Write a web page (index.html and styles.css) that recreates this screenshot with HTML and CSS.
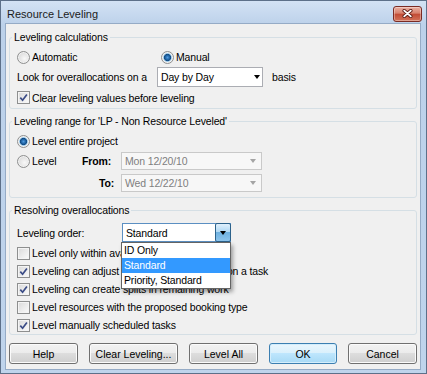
FILE: index.html
```html
<!DOCTYPE html>
<html lang="en">
<head>
    <meta charset="UTF-8">
    <meta name="viewport" content="width=device-width, initial-scale=1.0">
    <title>Resource Leveling</title>
    <link rel="stylesheet" href="styles.css">
</head>
<body>

    <div class="window">
        <div class="titlebar">
            <span class="title">Resource Leveling</span>
            <button class="close" type="button">
                <svg width="11" height="9" viewBox="0 0 11 9">
                    <path d="M2.2 1.6 L8.8 7.4 M8.8 1.6 L2.2 7.4" stroke="#5b1c16" stroke-width="3.4" stroke-linecap="round"/>
                    <path d="M2.2 1.6 L8.8 7.4 M8.8 1.6 L2.2 7.4" stroke="#fff" stroke-width="1.8" stroke-linecap="round"/>
                </svg>
            </button>
        </div>

        <div class="frame">
            <div class="client">

                <!-- leveling calculations -->
                <fieldset class="group">
                    <legend>Leveling calculations</legend>
                    <div class="row row-first">
                        <label class="opt col-auto"><span class="radio"></span>Automatic</label>
                        <label class="opt"><span class="radio on"></span>Manual</label>
                    </div>
                    <div class="row row-combo">
                        <span class="look-label">Look for overallocations on a</span>
                        <div class="combo combo-day">
                            <span class="val">Day by Day</span>
                            <span class="arrow"></span>
                        </div>
                        <span class="basis">basis</span>
                    </div>
                    <div class="row row-combo">
                        <label class="opt"><span class="check on"><svg width="9" height="9" viewBox="0 0 9 9"><path d="M1.3 4.6 L3.6 7.2 L7.9 1.4" fill="none" stroke="#3b4c86" stroke-width="1.7"/></svg></span>Clear leveling values before leveling</label>
                    </div>
                </fieldset>

                <!-- leveling range -->
                <fieldset class="group group-range">
                    <legend>Leveling range for 'LP - Non Resource Leveled'</legend>
                    <div class="row row-first">
                        <label class="opt"><span class="radio on"></span>Level entire project</label>
                    </div>
                    <div class="row row-range">
                        <label class="opt col-level"><span class="radio"></span>Level</label>
                        <span class="range-label">From:</span>
                        <div class="combo combo-off">
                            <span class="val">Mon 12/20/10</span>
                            <span class="arrow"></span>
                        </div>
                    </div>
                    <div class="row row-range">
                        <span class="col-level"></span>
                        <span class="range-label to">To:</span>
                        <div class="combo combo-off">
                            <span class="val">Wed 12/22/10</span>
                            <span class="arrow"></span>
                        </div>
                    </div>
                </fieldset>

                <!-- resolving overallocations -->
                <fieldset class="group">
                    <legend>Resolving overallocations</legend>
                    <div class="row row-order">
                        <span class="order-label">Leveling order:</span>
                        <div class="combo combo-open">
                            <span class="val">Standard</span>
                            <span class="drop-btn"><span class="arrow"></span></span>
                            <ul class="drop-list">
                                <li>ID Only</li>
                                <li class="selected">Standard</li>
                                <li>Priority, Standard</li>
                            </ul>
                        </div>
                    </div>
                    <div class="row row-check first-check">
                        <label class="opt"><span class="check"></span>Level only within available slack</label>
                    </div>
                    <div class="row row-check">
                        <label class="opt"><span class="check on"><svg width="9" height="9" viewBox="0 0 9 9"><path d="M1.3 4.6 L3.6 7.2 L7.9 1.4" fill="none" stroke="#3b4c86" stroke-width="1.7"/></svg></span>Leveling can adjust individual assignments on a task</label>
                    </div>
                    <div class="row row-check">
                        <label class="opt"><span class="check on"><svg width="9" height="9" viewBox="0 0 9 9"><path d="M1.3 4.6 L3.6 7.2 L7.9 1.4" fill="none" stroke="#3b4c86" stroke-width="1.7"/></svg></span>Leveling can create splits in remaining work</label>
                    </div>
                    <div class="row row-check">
                        <label class="opt"><span class="check"></span>Level resources with the proposed booking type</label>
                    </div>
                    <div class="row row-check">
                        <label class="opt"><span class="check on"><svg width="9" height="9" viewBox="0 0 9 9"><path d="M1.3 4.6 L3.6 7.2 L7.9 1.4" fill="none" stroke="#3b4c86" stroke-width="1.7"/></svg></span>Level manually scheduled tasks</label>
                    </div>
                </fieldset>

                <div class="buttons">
                    <button class="btn" type="button">Help</button>
                    <button class="btn btn-wide" type="button">Clear Leveling...</button>
                    <button class="btn" type="button">Level All</button>
                    <button class="btn btn-ok" type="button">OK</button>
                    <button class="btn" type="button">Cancel</button>
                </div>

            </div>
        </div>
    </div>

</body>
</html>
```

FILE: styles.css
```css
* {
    box-sizing: border-box;
}

body {
    margin: 0;
    font-family: "Liberation Sans", Arial, sans-serif;
    font-size: 10.5px;
    letter-spacing: -0.15px;
    color: #000;
}

/* window frame */
.window {
    width: 427px;
    height: 374px;
    display: flex;
    flex-direction: column;
    border: 1px solid #5d7089;
    background: linear-gradient(#d3e2f4, #bcd1ea 24px, #bfd4ec);
}

.titlebar {
    flex: none;
    height: 22px;
    display: flex;
    align-items: center;
    padding: 3px 4px 0 6px;
}

.title {
    font-size: 11px;
    letter-spacing: 0;
    color: #1b1b1b;
}

.close {
    margin-left: auto;
    width: 29px;
    height: 16px;
    padding: 0;
    display: flex;
    align-items: center;
    justify-content: center;
    border: 1px solid #7a2b24;
    border-radius: 3px;
    background: linear-gradient(#eab0a3, #d7806c 45%, #c24a34 50%, #d2735a);
    box-shadow: inset 0 0 0 1px rgba(255, 255, 255, 0.35);
}

.frame {
    flex: 1;
    display: flex;
    padding: 0 5px 3px 4px;
}

.client {
    flex: 1;
    background: #f0f0f0;
    border: 1px solid #95abc6;
    padding: 6px 3px 5px;
}

/* group boxes */
.group {
    margin: 0;
    min-width: 0;
    padding: 0 6px 0 2px;
    border: 1px solid #d5dfe5;
    border-radius: 3px;
}

.group + .group {
    margin-top: 5px;
}

.group legend {
    padding: 0 2px;
    height: 14px;
    line-height: 14px;
}

.group-range {
    padding-bottom: 3px;
}

.row {
    display: flex;
    align-items: center;
    padding-left: 5px;
}

.row-first {
    margin-top: 4px;
    height: 18px;
}

.row-combo {
    height: 21px;
}

.row-range {
    height: 22px;
}

.row-order {
    margin-top: 5px;
    height: 21px;
}

.row-check {
    height: 18px;
}

.first-check {
    margin-top: 1px;
}

.opt {
    display: flex;
    align-items: center;
    white-space: nowrap;
}

.col-auto {
    width: 144px;
}

.col-level {
    width: 65px;
}

/* radio and check */
.radio {
    flex: none;
    width: 13px;
    height: 13px;
    margin-right: 2px;
    border: 1px solid #8e8f8f;
    border-radius: 50%;
    background: radial-gradient(circle at 60% 60%, #f8f8f8, #dadada 75%);
    box-shadow: inset 0 0 0 1px #f2f2f2;
}

.radio.on {
    background: radial-gradient(circle, #4f9be0 0, #1c5f9f 2.4px, #144a80 3.2px, #8cc3ea 3.9px, #e4e4e4 4.8px, #f7f7f7 6px);
}

.check {
    flex: none;
    width: 13px;
    height: 13px;
    margin-right: 2px;
    display: flex;
    align-items: center;
    justify-content: center;
    border: 1px solid #8e8f8f;
    background: linear-gradient(135deg, #d9d9d9, #fbfbfb);
    box-shadow: inset 0 0 0 1px #f4f4f4;
}

/* combos */
.combo {
    position: relative;
    display: flex;
    align-items: center;
    height: 20px;
    padding-left: 3px;
    border: 1px solid #abadb3;
    background: #fff;
}

.combo .val {
    flex: 1;
    white-space: nowrap;
}

.arrow {
    width: 0;
    height: 0;
    border-left: 3.5px solid transparent;
    border-right: 3.5px solid transparent;
    border-top: 4px solid #000;
}

.look-label {
    width: 140px;
}

.combo-day {
    width: 106px;
}

.combo-day .arrow {
    margin-right: 2px;
}

.basis {
    margin-left: 9px;
}

.range-label {
    width: 39px;
    font-weight: bold;
}

.range-label.to {
    padding-left: 17px;
}

.combo-off {
    width: 141px;
    height: 18px;
    border-color: #c9c9c9;
    background: #f7f7f7;
    color: #7f7f7f;
}

.combo-off .arrow {
    margin-right: 5px;
    border-top-color: #a4a4a4;
}

.order-label {
    width: 105px;
}

.combo-open {
    width: 109px;
    height: 19px;
    padding-right: 0;
    border-color: #5b8fc2;
}

.drop-btn {
    align-self: stretch;
    width: 16px;
    display: flex;
    align-items: center;
    justify-content: center;
    border: 1px solid #2c628b;
    border-radius: 2px;
    margin: -1px -1px -1px 0;
    background: linear-gradient(#e0f0fc, #b1d9f4 45%, #6fb1e0 50%, #8cc4ec);
}

.drop-list {
    position: absolute;
    top: calc(100% + 1px);
    left: -2px;
    width: 110px;
    margin: 0;
    padding: 0;
    list-style: none;
    border: 1px solid #646464;
    background: #fff;
    box-shadow: 2px 3px 4px rgba(0, 0, 0, 0.35);
    z-index: 2;
}

.drop-list li {
    height: 15px;
    line-height: 15px;
    padding-left: 2px;
    white-space: nowrap;
}

.drop-list .selected {
    background: #3399ff;
    color: #fff;
}

/* dialog buttons */
.buttons {
    display: flex;
    justify-content: space-between;
    margin-top: 8px;
}

.btn {
    width: 69px;
    height: 21px;
    padding: 0;
    font: inherit;
    color: #000;
    border: 1px solid #707070;
    border-radius: 3px;
    background: linear-gradient(#f2f2f2, #ebebeb 50%, #dddddd 50%, #cfcfcf);
    box-shadow: inset 0 0 0 1px #fbfbfb;
}

.btn-wide {
    width: 89px;
}

.btn-ok {
    width: 68px;
    border-color: #3c7fb1;
    background: linear-gradient(#eaf6fd, #d9f0fc 50%, #bee6fd 50%, #a7d9f5);
    box-shadow: inset 0 0 0 1px #d4eefc;
}
```
